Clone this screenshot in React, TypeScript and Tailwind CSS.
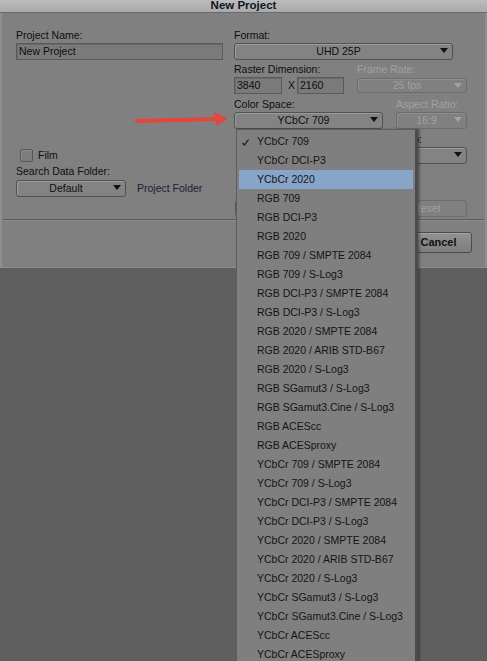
import React from 'react';

const colorSpaces = [
    'YCbCr 709',
    'YCbCr DCI-P3',
    'YCbCr 2020',
    'RGB 709',
    'RGB DCI-P3',
    'RGB 2020',
    'RGB 709 / SMPTE 2084',
    'RGB 709 / S-Log3',
    'RGB DCI-P3 / SMPTE 2084',
    'RGB DCI-P3 / S-Log3',
    'RGB 2020 / SMPTE 2084',
    'RGB 2020 / ARIB STD-B67',
    'RGB 2020 / S-Log3',
    'RGB SGamut3 / S-Log3',
    'RGB SGamut3.Cine / S-Log3',
    'RGB ACEScc',
    'RGB ACESproxy',
    'YCbCr 709 / SMPTE 2084',
    'YCbCr 709 / S-Log3',
    'YCbCr DCI-P3 / SMPTE 2084',
    'YCbCr DCI-P3 / S-Log3',
    'YCbCr 2020 / SMPTE 2084',
    'YCbCr 2020 / ARIB STD-B67',
    'YCbCr 2020 / S-Log3',
    'YCbCr SGamut3 / S-Log3',
    'YCbCr SGamut3.Cine / S-Log3',
    'YCbCr ACEScc',
    'YCbCr ACESproxy',
];

const Caret: React.FC<{ disabled?: boolean }> = ({ disabled }) => (
    <svg width="8" height="5" viewBox="0 0 8 5" className="absolute right-[4px] top-[4px]">
        <path d="M0 0 H8 L4 5 Z" fill={disabled ? '#a3a3a3' : '#111'} />
    </svg>
);

const Select: React.FC<{ value: string; className: string; disabled?: boolean }> = ({
    value,
    className,
    disabled,
}) => (
    <div
        className={`relative flex items-center justify-center pr-[10px] rounded-[3px] border ${
            disabled
                ? 'border-[#6c6c6c] text-[#a1a1a1] bg-[#808080] shadow-[inset_1px_1px_0_#8e8e8e]'
                : 'border-[#515151] text-[#0e0e0e] bg-[#838383] shadow-[inset_1px_1px_0_#9c9c9c]'
        } ${className}`}
    >
        <span className="leading-none">{value}</span>
        <Caret disabled={disabled} />
    </div>
);

const Field: React.FC<{ value: string; className: string }> = ({ value, className }) => (
    <div
        className={`flex items-center pl-[2px] border border-[#5a5a5a] bg-[#7a7a7a] shadow-[inset_1px_1px_0_#6a6a6a] text-[#0e0e0e] ${className}`}
    >
        {value}
    </div>
);

const Label: React.FC<{ children: React.ReactNode; disabled?: boolean; className?: string }> = ({
    children,
    disabled,
    className = '',
}) => (
    <div
        className={`h-[13px] leading-[13px] whitespace-nowrap ${
            disabled ? 'text-[#a0a0a0]' : 'text-[#0e0e0e]'
        } ${className}`}
    >
        {children}
    </div>
);

export default function App() {
    return (
        <div className="relative w-[487px] h-[661px] overflow-hidden bg-[#5f5f5f] font-['Liberation_Sans',Arial,sans-serif] text-[10.5px] text-[#0e0e0e]">
            {/* title bar */}
            <div className="h-[13px] flex items-center justify-center bg-gradient-to-b from-[#bdbdbd] to-[#a9a9a9] border-b border-[#6a6a6a]">
                <span className="font-bold text-[11.5px] leading-none text-[#0c1626]">New Project</span>
            </div>

            {/* dialog body */}
            <div className="h-[255px] flex flex-col bg-[#808080] border-x-2 border-x-[#8f8f8f] border-b border-b-[#8d8d8d]">
                <div className="flex pl-[14px] pt-[16px]">
                    {/* left column */}
                    <div className="w-[207px] flex flex-col">
                        <Label>Project Name:</Label>
                        <Field value="New Project" className="mt-[1px] h-[17px] w-[207px]" />

                        <div className="mt-[89px] flex items-center h-[12px]">
                            <div className="ml-[4px] w-[13px] h-[13px] rounded-[2px] border border-[#565656] bg-[#7c7c7c] shadow-[inset_1px_1px_0_#8e8e8e]" />
                            <span className="ml-[5px] leading-none">Film</span>
                        </div>

                        <Label className="mt-[4px]">Search Data Folder:</Label>
                        <div className="mt-[2px] flex items-center">
                            <Select value="Default" className="h-[17px] w-[110px]" />
                            <span className="ml-[11px] text-[#1a2131] whitespace-nowrap">Project Folder</span>
                        </div>
                    </div>

                    {/* right column */}
                    <div className="ml-[11px] w-[233px] flex flex-col">
                        <Label>Format:</Label>
                        <Select value="UHD 25P" className="mt-[1px] h-[17px] w-[219px]" />

                        <div className="mt-[3px] flex">
                            <div className="w-[123px] flex flex-col">
                                <Label>Raster Dimension:</Label>
                                <div className="mt-[1px] flex items-center">
                                    <Field value="3840" className="h-[17px] w-[48px]" />
                                    <span className="ml-[6px] w-[9px]">X</span>
                                    <Field value="2160" className="h-[17px] w-[47px]" />
                                </div>
                            </div>
                            <div className="flex flex-col">
                                <Label disabled>Frame Rate:</Label>
                                <Select value="25 fps" disabled className="mt-[2px] h-[15px] w-[110px]" />
                            </div>
                        </div>

                        <div className="mt-[4px] flex">
                            <div className="w-[162px] flex flex-col">
                                <Label>Color Space:</Label>
                                <Select value="YCbCr 709" className="mt-[1px] h-[17px] w-[149px]" />
                            </div>
                            <div className="flex flex-col">
                                <Label disabled>Aspect Ratio:</Label>
                                <Select value="16:9" disabled className="mt-[1px] h-[17px] w-[71px]" />
                            </div>
                        </div>

                        <div className="mt-[4px] flex flex-col items-end">
                            <Label className="w-[80px] text-right pr-[45px]">Stereo:</Label>
                            <Select value="" className="mt-[1px] h-[17px] w-[80px]" />
                        </div>

                        <div className="mt-[36px] flex justify-between">
                            <div className="ml-[1px] h-[17px] w-[140px] rounded-[3px] border border-[#565656] bg-[#838383]" />
                            <div className="h-[17px] w-[80px] rounded-[3px] border border-[#6c6c6c] text-[#a1a1a1] flex items-center justify-center">
                                Reset
                            </div>
                        </div>
                    </div>
                </div>

                <div className="mx-[1px] mt-[2px] h-px bg-[#5c5c5c]" />
                <div className="mx-[1px] h-px bg-[#8b8b8b]" />

                <div className="mt-[11px] flex justify-end pr-[13px]">
                    <div className="h-[21px] w-[67px] rounded-[3px] border border-[#4c4c4c] bg-gradient-to-b from-[#929292] to-[#7e7e7e] shadow-[inset_1px_1px_0_#a4a4a4] flex items-center justify-center font-bold text-[11px] text-[#111]">
                        Cancel
                    </div>
                </div>
            </div>

            {/* red arrow */}
            <svg width="105" height="30" viewBox="0 0 105 30" className="absolute left-[130px] top-[105px]">
                <path d="M7 16 L87 14" stroke="#e3463d" strokeWidth="4" strokeLinecap="round" />
                <path d="M84 7 L98 13.5 L86 21 Z" fill="#e3463d" />
            </svg>

            {/* color space menu */}
            <div className="absolute left-[236px] top-[129px] w-[182px] h-[560px] pt-[2px] bg-[#7f7f7f] border-t border-l border-[#5e5e5e] border-r-[3px] border-r-[#4b4b4b] shadow-[2px_0_2px_rgba(0,0,0,0.3)]">
                {colorSpaces.map((name, i) => (
                    <div
                        key={name}
                        className={`relative h-[19px] mr-[2px] ml-[2px] flex items-center pl-[18px] whitespace-nowrap text-[#141414] ${
                            i === 2 ? 'bg-[#87a4c9]' : ''
                        }`}
                    >
                        {i === 0 && (
                            <svg width="7" height="7" viewBox="0 0 7 7" className="absolute left-[3px] top-[7px]">
                                <path d="M0.5 3.8 L2.4 6 L6.5 0.6" stroke="#1a1a1a" strokeWidth="1.2" fill="none" />
                            </svg>
                        )}
                        {name}
                    </div>
                ))}
            </div>
        </div>
    );
}
